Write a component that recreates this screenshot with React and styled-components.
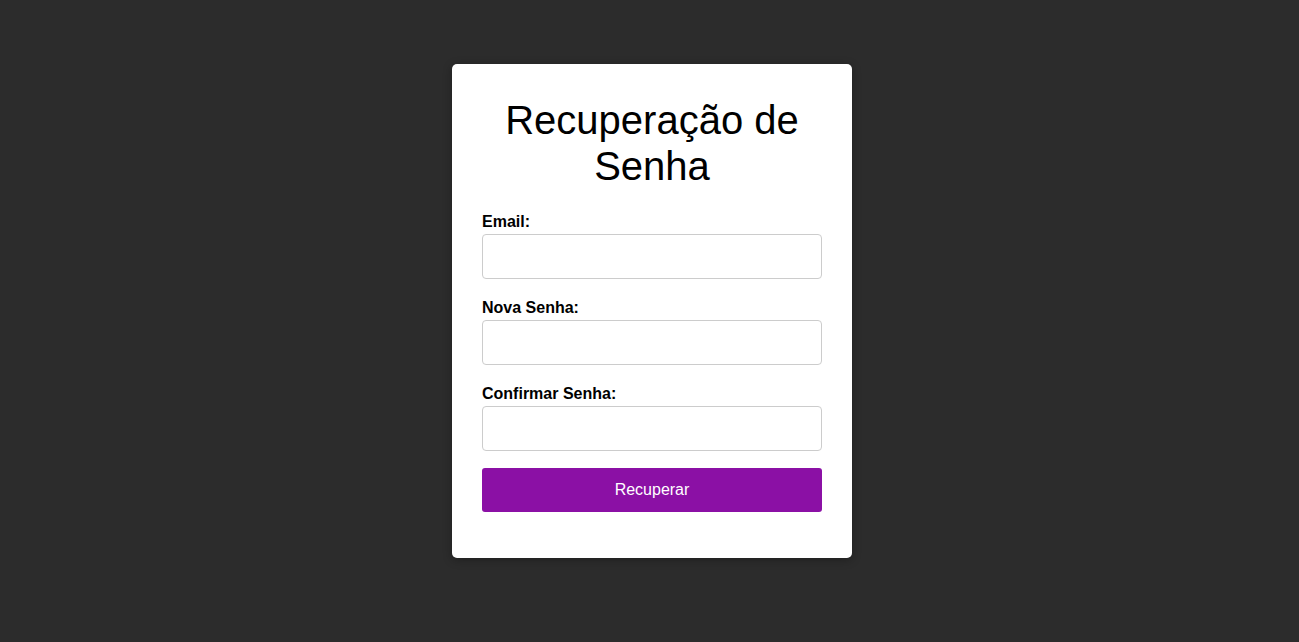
import React from 'react';
import styled, { createGlobalStyle } from 'styled-components';

const GlobalStyle = createGlobalStyle`
  * {
    box-sizing: border-box;
  }

  body {
    margin: 0;
    background-color: #2c2c2c;
    font-family: 'Liberation Sans', Arial, sans-serif;
  }
`;

const StyledPage = styled.main`
  display: flex;
  justify-content: center;
  align-items: center;
  min-height: 100vh;
  padding: 0 0 20px 5px;
`;

const StyledCard = styled.div`
  width: 400px;
  padding: 30px 30px 46px;
  background-color: #fff;
  border-radius: 5px;
  box-shadow: 0 2px 10px rgba(0, 0, 0, 0.3);

  h2 {
    margin: 3px 0 24px;
    font-size: 40px;
    font-weight: 400;
    line-height: 46px;
    text-align: center;
    color: #000;
  }
`;

const StyledField = styled.div`
  display: flex;
  flex-direction: column;
  margin-bottom: ${({ last }) => (last ? '17px' : '20px')};

  label {
    margin-bottom: 3px;
    font-size: 16px;
    font-weight: 700;
    line-height: 18px;
    color: #000;
  }

  input {
    width: 100%;
    height: 45px;
    padding: 0 10px;
    border: 1px solid #ccc;
    border-radius: 4px;
    font-family: inherit;
    font-size: 16px;
    outline: 0;
  }
`;

const StyledButton = styled.button`
  display: block;
  width: 100%;
  height: 44px;
  border: 0;
  border-radius: 3px;
  background-color: #8b10a5;
  color: #fff;
  font-family: inherit;
  font-size: 16px;
  cursor: pointer;
`;

const App = () => {
  const fields = [
    { id: 'email', label: 'Email:', type: 'email' },
    { id: 'nova', label: 'Nova Senha:', type: 'password' },
    { id: 'confirmar', label: 'Confirmar Senha:', type: 'password' },
  ];

  return (
    <>
      <GlobalStyle />
      <StyledPage>
        <StyledCard>
          <h2>
            Recuperação de
            <br />
            Senha
          </h2>

          <form onSubmit={e => e.preventDefault()}>
            {fields.map((field, i) => (
              <StyledField key={field.id} last={i === fields.length - 1}>
                <label htmlFor={field.id}>{field.label}</label>
                <input id={field.id} type={field.type} />
              </StyledField>
            ))}

            <StyledButton type="submit">Recuperar</StyledButton>
          </form>
        </StyledCard>
      </StyledPage>
    </>
  );
};

export default App;
